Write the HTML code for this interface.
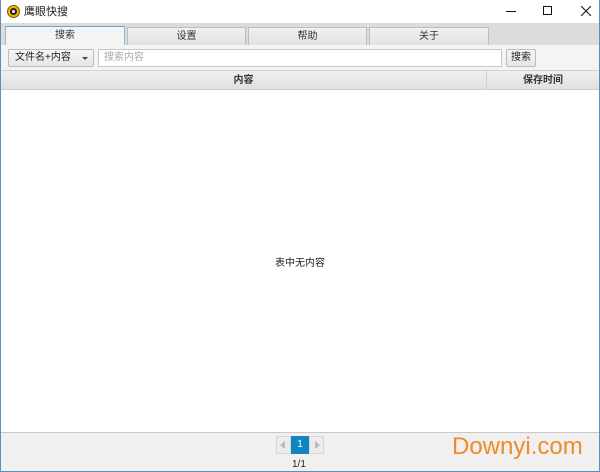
<!DOCTYPE html>
<html><head><meta charset="utf-8"><style>
*{margin:0;padding:0;box-sizing:border-box}
body{width:600px;height:472px;overflow:hidden;font-family:"Liberation Sans","Noto Sans CJK SC",sans-serif;font-size:11px;color:#222;background:#fff;position:relative}
.win{position:absolute;left:0;top:0;width:600px;height:472px;border:1px solid #5a8fc0;border-top:none}
.abs{position:absolute}
.title{left:0;top:0;width:600px;height:23px;background:#fff}
.tabbar{left:1px;top:23px;width:598px;height:22px;background:#dcdcdc}
.tab{top:27px;height:18px;background:linear-gradient(#f0f0f0,#e2e2e2);border:1px solid #bdbdbd;border-bottom:none;text-align:center;line-height:17px;font-size:10px;color:#333}
.tab.sel{background:#f4f4f4;border-color:#8fb7d6;border-top:1px solid #6aa6d2;height:19px}
.toolbar{left:1px;top:45px;width:598px;height:26px;background:#f4f4f4;border-bottom:1px solid #d0d0d0}
.hdr{left:1px;top:71px;width:598px;height:19px;background:linear-gradient(#f0f0f0,#e0e0e0);border-bottom:1px solid #d0d0d0;font-weight:bold;font-size:10px;line-height:19px;color:#333}
.footer{left:1px;top:432px;width:598px;height:39px;background:#f0f0f0;border-top:1px solid #c8c8c8}
</style></head><body>
<div class="abs title"></div>
<div class="abs" style="left:7px;top:5px;width:13px;height:13px;border-radius:50%;background:#f3b400;border:1px solid #7a5a00"></div>
<div class="abs" style="left:10px;top:8px;width:7px;height:7px;border-radius:50%;background:#222"></div>
<div class="abs" style="left:12px;top:10px;width:3px;height:3px;border-radius:50%;background:#fff"></div>
<div class="abs" style="left:24px;top:5px;font-size:11px;line-height:14px">鹰眼快搜</div>
<div class="abs" style="left:506px;top:11px;width:10px;height:1px;background:#111"></div>
<div class="abs" style="left:543px;top:6px;width:9px;height:9px;border:1px solid #111"></div>
<svg class="abs" style="left:581px;top:6px" width="10" height="10"><path d="M0 0L10 10M10 0L0 10" stroke="#111" stroke-width="1"/></svg>
<div class="abs tabbar"></div>
<div class="abs tab sel" style="left:5px;width:120px;top:26px">搜索</div>
<div class="abs tab" style="left:127px;width:119px">设置</div>
<div class="abs tab" style="left:248px;width:119px">帮助</div>
<div class="abs tab" style="left:369px;width:120px">关于</div>
<div class="abs toolbar"></div>
<div class="abs" style="left:8px;top:49px;width:86px;height:18px;border:1px solid #bcbcbc;border-radius:2px;background:linear-gradient(#f6f6f6,#e6e6e6);font-size:10px;line-height:16px;padding-left:6px">文件名+内容</div>
<div class="abs" style="left:82px;top:57px;width:0;height:0;border-left:3px solid transparent;border-right:3px solid transparent;border-top:3px solid #444"></div>
<div class="abs" style="left:98px;top:49px;width:404px;height:18px;border:1px solid #c8c8c8;background:#fff;font-size:10px;line-height:16px;padding-left:5px;color:#aaa">搜索内容</div>
<div class="abs" style="left:506px;top:49px;width:30px;height:18px;border:1px solid #bcbcbc;border-radius:2px;background:linear-gradient(#f6f6f6,#e6e6e6);font-size:10px;line-height:16px;text-align:center">搜索</div>
<div class="abs hdr"><span class="abs" style="left:0;width:485px;text-align:center">内容</span><span class="abs" style="left:485px;width:113px;text-align:center;border-left:1px solid #cfcfcf;height:19px">保存时间</span></div>
<div class="abs" style="left:0;top:254px;width:600px;text-align:center;font-size:10px">表中无内容</div>
<div class="abs footer"></div>
<div class="abs" style="left:276px;top:436px;width:15px;height:18px;border:1px solid #d6d6d6;background:#ececec"></div>
<div class="abs" style="left:280px;top:441px;width:0;height:0;border-top:4px solid transparent;border-bottom:4px solid transparent;border-right:5px solid #bbb"></div>
<div class="abs" style="left:291px;top:436px;width:18px;height:18px;background:#0f86c0;color:#fff;font-size:10px;line-height:18px;text-align:center">1</div>
<div class="abs" style="left:309px;top:436px;width:15px;height:18px;border:1px solid #d6d6d6;background:#ececec"></div>
<div class="abs" style="left:315px;top:441px;width:0;height:0;border-top:4px solid transparent;border-bottom:4px solid transparent;border-left:5px solid #bbb"></div>
<div class="abs" style="left:292px;top:459px;font-size:10px">1/1</div>
<div class="abs" style="left:452px;top:433px;font-size:24px;color:#f08a24;line-height:28px">Downyi.com</div>
<div class="win"></div>
</body></html>
